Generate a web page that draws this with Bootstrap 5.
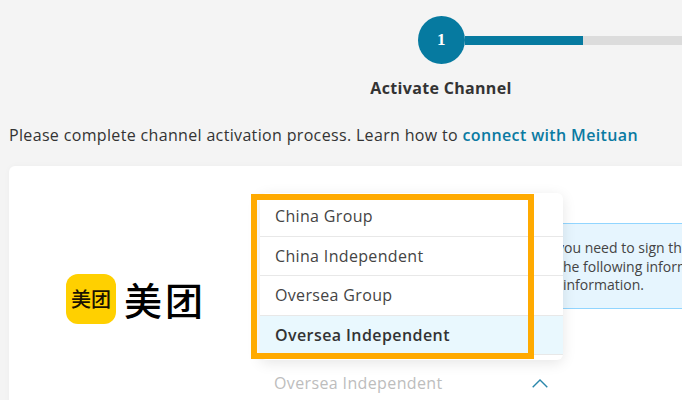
<!DOCTYPE html>
<html lang="en">
<head>
<meta charset="utf-8">
<title>Activate Channel</title>
<link href="https://cdn.jsdelivr.net/npm/bootstrap@5.3.0/dist/css/bootstrap.min.css" rel="stylesheet">
<style>
html,body{height:400px;overflow:hidden;}
body{background:#f4f4f4;color:#333;font-family:"Open Sans","Noto Sans",sans-serif;font-size:16px;letter-spacing:.34px;}
.pg-wrap{width:1000px;padding:16px 0 0 9px;}
.step-row{padding-left:409px;}
.step-num{width:47px;height:48px;background:#067aa0;color:#fff;font:700 17px "Liberation Serif",serif;flex:none;}
.step-track{width:400px;height:9px;background:#dcdcdc;border-radius:0;}
.step-track .progress-bar{background:#067aa0;}
.step-name{width:300px;margin-left:282px;margin-top:12px;font-weight:700;line-height:24px;color:#333;letter-spacing:.32px;}
.intro{margin:23px 0 0;line-height:24px;}
.intro a{color:#0a7aa2;font-weight:600;text-decoration:none;letter-spacing:.36px;}
.panel{margin-top:19px;height:400px;border:0;border-radius:6px;background:#fff;box-shadow:0 0 6px rgba(0,0,0,.03);}
.logo-col{width:257px;height:216px;flex:none;padding-left:57px;gap:10px;}
.logo-tile{width:50px;height:50px;border-radius:12px;background:#ffd000;color:#1a1200;font:500 20px/50px "Noto Sans CJK SC",sans-serif;letter-spacing:0;flex:none;}
.logo-word{font:500 38px/50px "Noto Sans CJK SC",sans-serif;color:#000;white-space:nowrap;letter-spacing:3px;}
.form-col{width:600px;}
.notice{margin-top:57px;height:86px;padding:15px 16px 0 16px;background:#e6f5fe;border:1px solid #91d5ff;border-width:1px 0;border-radius:0;font-size:14px;line-height:18.5px;color:#444;letter-spacing:0;}
.notice p{margin:0;white-space:nowrap;}
.sel-field{margin-top:62px;width:282px;padding-left:8px;line-height:24px;color:#bdbdbd;letter-spacing:.37px;}
.menu-pop{position:absolute;left:251px;top:27px;width:303px;padding:4px 0 5px;background:#fff;border-radius:6px;box-shadow:0 3px 14px rgba(0,0,0,.1);overflow:hidden;}
.menu-pop .list-group-item{border:0;border-bottom:1px solid #e8e8e8;border-radius:0;height:39.5px;padding:0 0 0 15px;line-height:39.5px;color:#444;background:transparent;}
.menu-pop .list-group-item.picked{background:#e9f8fe;color:#333;font-weight:600;letter-spacing:.42px;line-height:39px;}
.menu-frame{position:absolute;left:242px;top:28px;width:283px;height:165px;border:6px solid #ffaa00;pointer-events:none;}
</style>
</head>
<body>
<div class="pg-wrap">
  <div class="step-row d-flex align-items-center">
    <div class="step-num rounded-circle d-flex align-items-center justify-content-center">1</div>
    <div class="progress step-track"><div class="progress-bar" style="width:29.5%"></div></div>
  </div>
  <div class="step-name text-center">Activate Channel</div>
  <p class="intro">Please complete channel activation process. Learn how to <a href="#">connect with Meituan</a></p>
  <div class="card panel position-relative flex-row">
    <div class="logo-col d-flex align-items-end pb-0">
      <div class="d-flex align-items-center gap-2" style="margin-bottom:58px">
        <div class="logo-tile text-center">美团</div>
        <div class="logo-word">美团</div>
      </div>
    </div>
    <div class="form-col">
      <div class="notice">
        <p style="padding-left:275px">you need to sign the agreement</p>
        <p style="padding-left:276px">the following information and</p>
        <p style="padding-left:281px">information.</p>
      </div>
      <div class="sel-field d-flex justify-content-between align-items-center">
        <span>Oversea Independent</span>
        <svg width="16" height="9" viewBox="0 0 16 9" fill="none" stroke="#2a87ab" stroke-width="1.4"><path d="M.7 8.3 8 1l7.3 7.3"/></svg>
      </div>
    </div>
    <div class="menu-pop list-group">
      <div class="list-group-item">China Group</div>
      <div class="list-group-item">China Independent</div>
      <div class="list-group-item">Oversea Group</div>
      <div class="list-group-item picked">Oversea Independent</div>
    </div>
    <div class="menu-frame"></div>
  </div>
</div>
<script src="https://cdn.jsdelivr.net/npm/bootstrap@5.3.0/dist/js/bootstrap.bundle.min.js"></script>
</body>
</html>
